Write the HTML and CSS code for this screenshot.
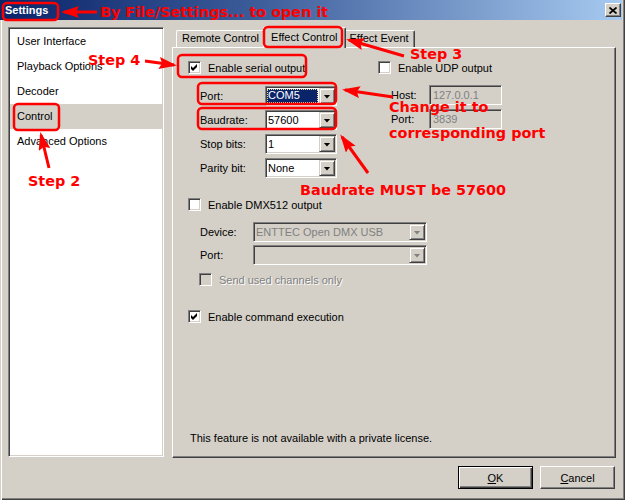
FILE: index.html
```html
<!DOCTYPE html>
<html lang="en">
<head>
<meta charset="utf-8">
<title>Settings</title>
<link rel="stylesheet" href="styles.css">
</head>
<body>
<div class="window">
  <div class="titlebar">
    <span class="title">Settings</span>
    <span class="close" aria-label="Close">
      <svg width="8" height="7" viewBox="0 0 8 7"><path d="M0.5 0.5 L7.5 6.5 M7.5 0.5 L0.5 6.5" stroke="#000" stroke-width="1.7" fill="none"/></svg>
    </span>
  </div>

  <div class="main">
    <ul class="nav">
      <li>User Interface</li>
      <li>Playback Options</li>
      <li>Decoder</li>
      <li class="sel">Control</li>
      <li>Advanced Options</li>
    </ul>

    <div class="tabbox">
      <div class="tabstrip">
        <div class="tab">Remote Control</div>
        <div class="tab active">Effect Control</div>
        <div class="tab">Effect Event</div>
      </div>

      <div class="panel">
        <div class="top">
          <div class="serial">
            <div class="check">
              <span class="box"><svg width="7" height="7" viewBox="0 0 7 7"><polygon points="0,2 2,4 6,0 6,3 2,7 0,5"/></svg></span>
              <span>Enable serial output</span>
            </div>
            <div class="fields">
              <div class="field"><span class="lbl">Port:</span>
                <div class="combo w72"><span class="val"><span class="hl">COM5</span></span><span class="drop"></span></div></div>
              <div class="field"><span class="lbl">Baudrate:</span>
                <div class="combo w72"><span class="val">57600</span><span class="drop"></span></div></div>
              <div class="field"><span class="lbl">Stop bits:</span>
                <div class="combo w72"><span class="val">1</span><span class="drop"></span></div></div>
              <div class="field"><span class="lbl">Parity bit:</span>
                <div class="combo w72"><span class="val">None</span><span class="drop"></span></div></div>
            </div>
          </div>

          <div class="udp">
            <div class="check">
              <span class="box"></span>
              <span>Enable UDP output</span>
            </div>
            <div class="fields">
              <div class="field"><span class="lbl">Host:</span><span class="textbox">127.0.0.1</span></div>
              <div class="field"><span class="lbl">Port:</span><span class="textbox">3839</span></div>
            </div>
          </div>
        </div>

        <div class="dmx">
          <div class="check">
            <span class="box"></span>
            <span>Enable DMX512 output</span>
          </div>
          <div class="fields">
            <div class="field"><span class="lbl">Device:</span>
              <div class="combo wide off"><span class="val">ENTTEC Open DMX USB</span><span class="drop"></span></div></div>
            <div class="field"><span class="lbl">Port:</span>
              <div class="combo wide off"><span class="val"></span><span class="drop"></span></div></div>
          </div>
          <div class="check sub">
            <span class="box off"></span>
            <span class="dis">Send used channels only</span>
          </div>
        </div>

        <div class="check cmd">
          <span class="box"><svg width="7" height="7" viewBox="0 0 7 7"><polygon points="0,2 2,4 6,0 6,3 2,7 0,5"/></svg></span>
          <span>Enable command execution</span>
        </div>

        <p class="note-line">This feature is not available with a private license.</p>
      </div>
    </div>
  </div>

  <div class="buttons">
    <button class="btn default"><u>O</u>K</button>
    <button class="btn"><u>C</u>ancel</button>
  </div>

  <svg class="notes" width="625" height="500" viewBox="0 0 625 500">
    <defs>
      <marker id="head" markerUnits="userSpaceOnUse" markerWidth="18" markerHeight="12" refX="15" refY="6" orient="auto">
        <path d="M0,0 L18,6 L0,12 L3,6 z" fill="#ff0000"/>
      </marker>
    </defs>
    <g class="frames">
      <rect x="3" y="3" width="55" height="17" rx="4"/>
      <rect x="264" y="27" width="78" height="20" rx="4"/>
      <rect x="178" y="55" width="128" height="22" rx="4"/>
      <rect x="14" y="104" width="45" height="26" rx="4"/>
      <rect x="198" y="83" width="138" height="21" rx="4"/>
      <rect x="198" y="108" width="138" height="21" rx="4"/>
    </g>
    <g class="arrows">
      <line x1="97" y1="12" x2="64" y2="12" marker-end="url(#head)"/>
      <line x1="145" y1="61" x2="174" y2="65" marker-end="url(#head)"/>
      <line x1="404" y1="56" x2="349" y2="40" marker-end="url(#head)"/>
      <line x1="49" y1="168" x2="41" y2="135" marker-end="url(#head)"/>
      <line x1="393" y1="97" x2="345" y2="90" marker-end="url(#head)"/>
      <line x1="368" y1="173" x2="342" y2="137" marker-end="url(#head)"/>
    </g>
    <g class="labels">
      <text x="100" y="17">By File/Settings... to open it</text>
      <text x="88" y="65">Step 4</text>
      <text x="410" y="59">Step 3</text>
      <text x="28" y="186">Step 2</text>
      <text x="389" y="112">Change it to</text>
      <text x="389" y="138">corresponding port</text>
      <text x="300" y="195">Baudrate MUST be 57600</text>
    </g>
  </svg>
</div>
</body>
</html>
```

FILE: styles.css
```css
* { box-sizing: border-box; }

body {
  margin: 0;
  background: #d4d0c8;
}

.window {
  position: relative;
  width: 625px;
  height: 500px;
  overflow: hidden;
  display: flex;
  flex-direction: column;
  background: #d4d0c8;
  color: #000;
  font: 11px "Liberation Sans", Arial, sans-serif;
  box-shadow: inset 1px 0 0 #d4d0c8, inset 2px 0 0 #fff,
              inset -1px -1px 0 #404040, inset -2px -2px 0 #808080;
}

/* caption */
.titlebar {
  height: 20px;
  margin-right: 3px;
  padding: 0 1px 0 5px;
  display: flex;
  align-items: center;
  justify-content: space-between;
  background: linear-gradient(90deg, #0a246a 0%, #3a5a98 40%, #a6caf0 100%);
}
.title { color: #fff; font-weight: bold; }
.close {
  width: 16px;
  height: 14px;
  display: flex;
  align-items: center;
  justify-content: center;
  background: #d4d0c8;
  border: 1px solid;
  border-color: #fff #404040 #404040 #fff;
  box-shadow: inset -1px -1px 0 #808080;
}

/* body */
.main {
  display: flex;
  gap: 8px;
  height: 431px;
  padding: 7px 9px 0 8px;
  box-sizing: content-box;
}

.nav {
  list-style: none;
  margin: 0;
  width: 156px;
  height: 430px;
  padding: 1px;
  background: #fff;
  border: 1px solid;
  border-color: #808080 #fff #fff #808080;
  box-shadow: inset 1px 1px 0 #404040, inset -1px -1px 0 #d4d0c8;
}
.nav li {
  height: 25px;
  line-height: 25px;
  padding-left: 7px;
}
.nav li.sel { background: #d4d0c8; }

.tabbox {
  flex: 1;
  display: flex;
  flex-direction: column;
}
.tabstrip {
  height: 20px;
  display: flex;
  align-items: flex-end;
  padding-left: 4px;
}
.tab {
  height: 17px;
  padding: 0 5px;
  line-height: 15px;
  border: 1px solid;
  border-color: #fff #404040 transparent #fff;
  border-bottom: 0;
  border-radius: 2px 2px 0 0;
  box-shadow: inset -1px 0 0 #808080;
  white-space: nowrap;
}
.tab.active {
  position: relative;
  z-index: 1;
  height: 21px;
  margin: 0 -2px -1px;
  padding: 0 7px;
  line-height: 18px;
  background: #d4d0c8;
}

.panel {
  flex: 1;
  display: flex;
  flex-direction: column;
  padding: 12px 0 12px 15px;
  border: 1px solid;
  border-color: #fff #404040 #404040 #fff;
  box-shadow: inset -1px -1px 0 #808080;
}

.top { display: flex; }
.serial { width: 190px; }

.check {
  display: flex;
  align-items: center;
  gap: 7px;
  height: 15px;
  white-space: nowrap;
}
.box {
  flex: none;
  width: 13px;
  height: 13px;
  display: flex;
  align-items: center;
  justify-content: center;
  background: #fff;
  border: 1px solid;
  border-color: #808080 #fff #fff #808080;
  box-shadow: inset 1px 1px 0 #404040, inset -1px -1px 0 #d4d0c8;
}
.box.off { background: #d4d0c8; }
.box svg { fill: #000; }

.fields {
  display: flex;
  flex-direction: column;
  gap: 4px;
}
.field {
  display: flex;
  align-items: center;
  height: 20px;
}
.serial .fields { padding-left: 12px; margin-top: 11px; }
.serial .lbl { width: 65px; }

.udp .fields { padding-left: 13px; margin-top: 10px; }
.udp .lbl { width: 38px; }

.combo {
  display: flex;
  height: 20px;
  padding: 1px;
  background: #fff;
  border: 1px solid;
  border-color: #808080 #fff #fff #808080;
  box-shadow: inset 1px 1px 0 #404040, inset -1px -1px 0 #d4d0c8;
}
.combo.w72 { width: 72px; }
.combo.wide { width: 174px; }
.combo .val {
  flex: 1;
  display: flex;
  align-items: center;
  padding-left: 1px;
  white-space: nowrap;
  overflow: hidden;
}
.combo .hl {
  flex: 1;
  align-self: stretch;
  margin: 1px 1px 1px -1px;
  padding-left: 1px;
  line-height: 12px;
  background: #0a246a;
  color: #fff;
  outline: 1px dotted #e8dca0;
  outline-offset: -1px;
}
.combo .drop {
  flex: none;
  width: 16px;
  height: 16px;
  display: flex;
  align-items: center;
  justify-content: center;
  background: #d4d0c8;
  border: 1px solid;
  border-color: #d4d0c8 #404040 #404040 #d4d0c8;
  box-shadow: inset 1px 1px 0 #fff, inset -1px -1px 0 #808080;
}
.combo .drop::after {
  content: "";
  width: 7px;
  height: 4px;
  margin-top: 1px;
  background: #000;
  clip-path: polygon(0 0, 100% 0, 50% 100%);
}
.combo.off { background: #d4d0c8; }
.combo.off .val { color: #808080; }
.combo.off .drop::after {
  background: #808080;
  filter: drop-shadow(1px 1px 0 #fff);
}

.textbox {
  width: 73px;
  height: 20px;
  padding-left: 3px;
  line-height: 18px;
  color: #808080;
  background: #d4d0c8;
  border: 1px solid;
  border-color: #808080 #fff #fff #808080;
  box-shadow: inset 1px 1px 0 #404040, inset -1px -1px 0 #d4d0c8;
}

.dmx { margin-top: 19px; }
.dmx .fields { padding-left: 12px; margin-top: 10px; gap: 3px; }
.dmx .lbl { width: 53px; }
.check.sub { margin-left: 11px; margin-top: 7px; }
.dis { color: #808080; text-shadow: 1px 1px 0 #fff; }

.check.cmd { margin-top: 22px; }

.note-line {
  margin: auto 0 0 2px;
  line-height: 13px;
}

/* dialog buttons */
.buttons {
  display: flex;
  justify-content: flex-end;
  gap: 7px;
  padding: 8px 10px 0 0;
}
.btn {
  width: 75px;
  height: 23px;
  padding: 0;
  font: inherit;
  color: #000;
  background: #d4d0c8;
  border: 1px solid;
  border-color: #fff #404040 #404040 #fff;
  box-shadow: inset -1px -1px 0 #808080;
}
.btn.default {
  border-color: #000;
  box-shadow: inset 1px 1px 0 #fff, inset -1px -1px 0 #404040, inset -2px -2px 0 #808080;
}

/* red callouts drawn over the dialog */
.notes {
  position: absolute;
  top: 0;
  left: 0;
  z-index: 5;
  pointer-events: none;
}
.notes .frames rect {
  fill: none;
  stroke: #ff0000;
  stroke-width: 2.5;
}
.notes .arrows line {
  stroke: #ff0000;
  stroke-width: 3;
}
.notes .labels text {
  font: bold 14.4px "DejaVu Sans", Verdana, sans-serif;
  fill: #ff0000;
}
```
